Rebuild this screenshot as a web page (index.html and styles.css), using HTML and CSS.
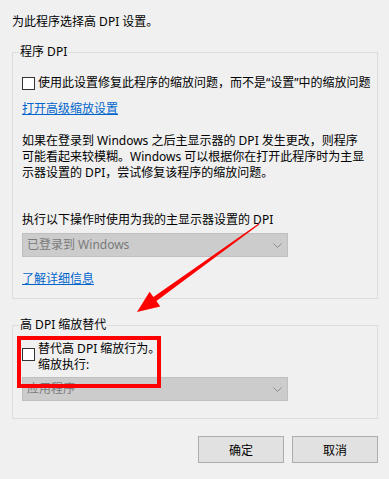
FILE: index.html
```html
<!DOCTYPE html>
<html lang="zh-CN">
<head>
<meta charset="utf-8">
<title>高 DPI 设置</title>
<link rel="stylesheet" href="styles.css">
</head>
<body>
<div class="dialog">
  <p class="title">为此程序选择高 DPI 设置。</p>

  <fieldset class="group g1">
    <legend>程序 DPI</legend>
    <div class="check"><span class="box"></span><span class="check-text">使用此设置修复此程序的缩放问题，而不是“设置”中的缩放问题</span></div>
    <a class="link l1" href="#">打开高级缩放设置</a>
    <p class="para">如果在登录到 Windows 之后主显示器的 DPI 发生更改，则程序<br>可能看起来较模糊。Windows 可以根据你在打开此程序时为主显<br>示器设置的 DPI，尝试修复该程序的缩放问题。</p>
    <p class="label">执行以下操作时使用为我的主显示器设置的 DPI</p>
    <div class="select s1"><span>已登录到 Windows</span><svg class="chev" width="9" height="5" viewBox="0 0 9 5"><polyline points="0.5,0.5 4.5,4.5 8.5,0.5" fill="none" stroke="#8a8a8a" stroke-width="1"/></svg></div>
    <a class="link l2" href="#">了解详细信息</a>
  </fieldset>

  <fieldset class="group g2">
    <legend>高 DPI 缩放替代</legend>
    <div class="check two"><span class="box"></span><span class="check-text">替代高 DPI 缩放行为。<br>缩放执行:</span></div>
    <div class="select s2"><span>应用程序</span><svg class="chev" width="9" height="5" viewBox="0 0 9 5"><polyline points="0.5,0.5 4.5,4.5 8.5,0.5" fill="none" stroke="#8a8a8a" stroke-width="1"/></svg></div>
  </fieldset>

  <div class="buttons">
    <button class="btn">确定</button>
    <button class="btn">取消</button>
  </div>

  <div class="redbox"></div>
  <svg class="arrow" width="389" height="479" viewBox="0 0 389 479">
    <polygon fill="#ff0000" points="259.3,224.4 156.4,301.1 160.2,306.4 137,312 149.6,291.8 153.4,297.1 258.7,223.6"/>
  </svg>
</div>
</body>
</html>
```

FILE: styles.css
```css
html, body {
  margin: 0;
  padding: 0;
  background: #f0f0f0;
}

.dialog {
  position: relative;
  width: 389px;
  height: 479px;
  box-sizing: border-box;
  padding: 14px 11px 0 12px;
  font-family: "Noto Sans", "Noto Sans CJK SC", sans-serif;
  font-size: 12px;
  line-height: 16px;
  color: #000;
  overflow: hidden;
}

.title {
  margin: 0;
  white-space: nowrap;
}

.group {
  margin: 14px 0 0 0;
  padding: 15px 4px 11px 9px;
  border: 1px solid #dcdcdc;
  min-width: 0;
}

.group legend {
  padding: 0 1px;
  margin-left: -3px;
  line-height: 16px;
}

.g2 {
  margin-top: 18px;
  padding-top: 8px;
  padding-bottom: 17px;
}

.check {
  display: flex;
  align-items: center;
  gap: 3px;
  white-space: nowrap;
}

.check.two {
  align-items: flex-start;
}

.check.two .box {
  margin-top: 7px;
}

.box {
  width: 13px;
  height: 13px;
  box-sizing: border-box;
  border: 1px solid #333;
  background: #fff;
  flex: none;
}

.link {
  display: block;
  width: max-content;
  color: #0066cc;
  text-decoration: underline;
}

.l1 {
  margin-top: 10px;
}

.para {
  margin: 16px 0 0 0;
  white-space: nowrap;
}

.label {
  margin: 31px 0 0 0;
  white-space: nowrap;
}

.select {
  display: flex;
  align-items: center;
  justify-content: space-between;
  width: 266px;
  height: 24px;
  box-sizing: border-box;
  margin-top: 5px;
  padding: 0 5px 0 4px;
  background: #cccccc;
  border: 1px solid #bfbfbf;
  color: #7a7a7a;
}

.s2 {
  margin-top: 4px;
}

.chev {
  display: block;
}

.l2 {
  margin-top: 14px;
}

.buttons {
  display: flex;
  justify-content: flex-end;
  gap: 8px;
  margin-top: 17px;
}

.btn {
  width: 86px;
  height: 27px;
  box-sizing: border-box;
  background: #e1e1e1;
  border: 1px solid #adadad;
  font-family: "Noto Sans", "Noto Sans CJK SC", sans-serif;
  font-size: 12px;
  color: #000;
  padding: 0;
}

.redbox {
  position: absolute;
  left: 17px;
  top: 336px;
  width: 144px;
  height: 52px;
  box-sizing: border-box;
  border: 4px solid #ff0000;
}

.arrow {
  position: absolute;
  left: 0;
  top: 0;
  pointer-events: none;
}
```
